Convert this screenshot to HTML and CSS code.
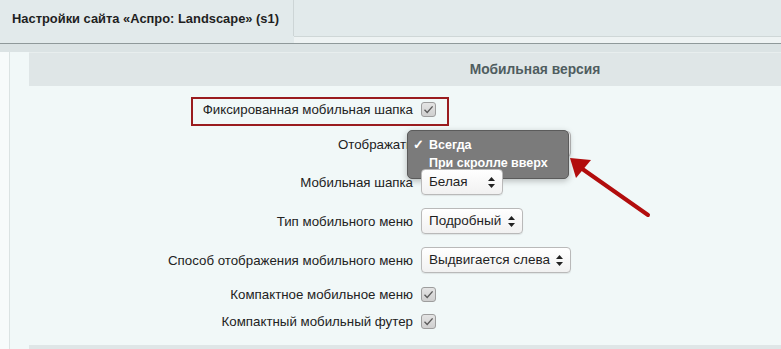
FILE: index.html
```html
<!DOCTYPE html>
<html lang="ru">
<head>
<meta charset="utf-8">
<title>Настройки сайта</title>
<link rel="stylesheet" href="styles.css">
</head>
<body>
<div class="topbar">
  <div class="tab">Настройки сайта «Аспро: Landscape» (s1)</div>
  <div class="tab-rest"></div>
</div>
<div class="strip"></div>
<div class="page">
  <div class="content">
    <div class="section-head">Мобильная версия</div>
    <div class="rows">
      <div class="row h1">
        <div class="highlight"></div>
        <div class="label">Фиксированная мобильная шапка</div>
        <div class="ctrl"><span class="cb"><svg viewBox="0 0 15 15" width="15" height="15"><path d="M3.5 7.8 L6.2 10.4 L11.6 4.4" fill="none" stroke="#5a5a5a" stroke-width="1.4"/></svg></span></div>
      </div>
      <div class="row h2">
        <div class="label">Отображать</div>
        <div class="ctrl">
          <div class="select w150"></div>
          <div class="popup">
            <div class="opt"><span class="check">✓</span>Всегда</div>
            <div class="opt">При скролле вверх</div>
          </div>
        </div>
      </div>
      <div class="row h3">
        <div class="label">Мобильная шапка</div>
        <div class="ctrl"><div class="select w82">Белая<span class="arr"><svg viewBox="0 0 7 11" width="7" height="11"><path d="M3.5 0 L7 4 H0Z M0 7 H7 L3.5 11Z" fill="#222"/></svg></span></div></div>
      </div>
      <div class="row h4">
        <div class="label">Тип мобильного меню</div>
        <div class="ctrl"><div class="select w102">Подробный<span class="arr"><svg viewBox="0 0 7 11" width="7" height="11"><path d="M3.5 0 L7 4 H0Z M0 7 H7 L3.5 11Z" fill="#222"/></svg></span></div></div>
      </div>
      <div class="row h5">
        <div class="label">Способ отображения мобильного меню</div>
        <div class="ctrl"><div class="select w150">Выдвигается слева<span class="arr"><svg viewBox="0 0 7 11" width="7" height="11"><path d="M3.5 0 L7 4 H0Z M0 7 H7 L3.5 11Z" fill="#222"/></svg></span></div></div>
      </div>
      <div class="row h6">
        <div class="label">Компактное мобильное меню</div>
        <div class="ctrl"><span class="cb"><svg viewBox="0 0 15 15" width="15" height="15"><path d="M3.5 7.8 L6.2 10.4 L11.6 4.4" fill="none" stroke="#5a5a5a" stroke-width="1.4"/></svg></span></div>
      </div>
      <div class="row h7">
        <div class="label">Компактный мобильный футер</div>
        <div class="ctrl"><span class="cb"><svg viewBox="0 0 15 15" width="15" height="15"><path d="M3.5 7.8 L6.2 10.4 L11.6 4.4" fill="none" stroke="#5a5a5a" stroke-width="1.4"/></svg></span></div>
      </div>
    </div>
    <div class="section-foot"></div>
  </div>
  <svg class="arrow" width="100" height="80" viewBox="560 150 100 80">
    <line x1="581" y1="168" x2="648" y2="215" stroke="#b20d0d" stroke-width="4" stroke-linecap="round"/>
    <polygon points="570,158 591,160 576,178" fill="#b20d0d"/>
  </svg>
</div>
</body>
</html>
```
FILE: styles.css
```css
* { box-sizing: border-box; }
html, body { margin: 0; padding: 0; }
body {
  width: 781px;
  height: 349px;
  overflow: hidden;
  font-family: "Liberation Sans", Arial, sans-serif;
  font-size: 13.3px;
  color: #222;
  background: #f1f8f8;
}
.topbar {
  display: flex;
  height: 44px;
  background: #e2eaeb;
  border-bottom: 1px solid #8f999a;
}
.tab {
  width: 294px;
  padding-left: 12px;
  line-height: 37px;
  font-weight: bold;
  font-size: 12.9px;
  color: #1f1f1f;
  border-right: 1px solid #cdd5d6;
  height: 36px;
}
.tab-rest {
  flex: 1;
  height: 43px;
  border-bottom: 6px solid #eef3f3;
  box-shadow: inset 0 -1px 0 #cfd7d7;
}
.strip {
  height: 8px;
  background: #dbe3e4;
}
.page {
  position: relative;
  display: flex;
  height: 297px;
  background: #f7fbfb;
}
.content {
  margin-left: 9px;
  flex: 1;
  border-left: 1px solid #dbe3e3;
  background: #f1f8f8;
  padding-left: 19px;
}
.section-head {
  height: 34px;
  background: #dfe6e7;
  border-top: 1px solid #e8eeee;
  font-weight: bold;
  font-size: 13.8px;
  color: #4f5d5f;
  line-height: 34px;
  text-align: center;
  padding-left: 260px;
}
.rows {
  padding-top: 6px;
}
.row {
  position: relative;
  display: grid;
  grid-template-columns: 384px 1fr;
  column-gap: 8px;
  align-items: center;
}
.h1 { height: 34px; }
.h2 { height: 36px; }
.h3 { height: 40px; }
.h4 { height: 38px; }
.h5 { height: 40px; }
.h6 { height: 29px; }
.h7 { height: 25px; }
.label {
  text-align: right;
  white-space: nowrap;
}
.ctrl {
  position: relative;
  display: flex;
  align-items: center;
}
.highlight {
  position: absolute;
  left: 162px;
  top: 5px;
  width: 258px;
  height: 29px;
  border: 2px solid #9a1c1f;
}
.cb {
  display: inline-flex;
  width: 15px;
  height: 15px;
  border: 1px solid #9d9d9d;
  border-radius: 3px;
  background: linear-gradient(#e4e4e4, #cfcfcf);
  overflow: hidden;
}
.cb svg { margin: -1px; }
.select {
  position: relative;
  height: 26px;
  line-height: 24px;
  padding-left: 7px;
  border: 1px solid #b9b9b9;
  border-radius: 4px;
  background: linear-gradient(#ffffff, #f1f1f1);
  box-shadow: 0 1px 1px rgba(0,0,0,0.08);
  font-size: 13.5px;
  color: #1f1f1f;
}
.w82 { width: 82px; }
.w102 { width: 102px; }
.w150 { width: 150px; }
.arr {
  position: absolute;
  right: 7px;
  top: 7px;
  display: flex;
}
.popup {
  position: absolute;
  left: -14px;
  top: -1px;
  width: 162px;
  height: 49px;
  background: #7b7b7b;
  border: 1px solid #5b5b5b;
  border-radius: 5px;
  box-shadow: 0 2px 6px rgba(0,0,0,0.25);
  padding-top: 5px;
}
.opt {
  position: relative;
  padding-left: 21px;
  height: 18px;
  line-height: 18px;
  font-weight: bold;
  font-size: 12.5px;
  color: #fff;
}
.check {
  position: absolute;
  left: 5px;
  top: 0;
  font-weight: bold;
}
.section-foot {
  margin-top: 11px;
  height: 10px;
  background: #dfe6e7;
}
.arrow {
  position: absolute;
  left: 560px;
  top: 98px;
}
```
